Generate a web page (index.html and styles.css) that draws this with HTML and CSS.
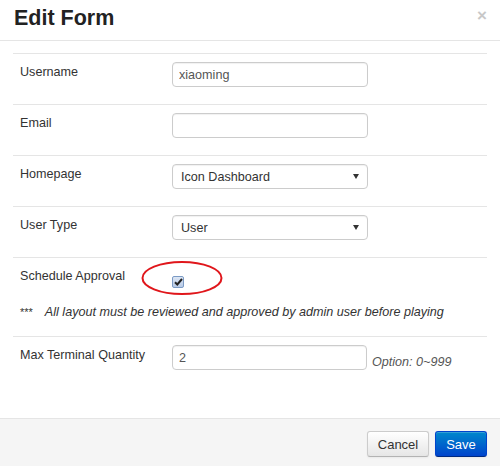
FILE: index.html
```html
<!DOCTYPE html>
<html>
<head>
<meta charset="utf-8">
<link rel="stylesheet" href="styles.css">
</head>
<body>
<div class="modal">
  <div class="modal-header">
    <h3 class="title">Edit Form</h3>
    <span class="close">&times;</span>
  </div>
  <div class="modal-body">
    <div class="row">
      <label class="lbl">Username</label>
      <div class="ctrl"><input class="field" type="text" value="xiaoming"></div>
    </div>
    <div class="row">
      <label class="lbl">Email</label>
      <div class="ctrl"><input class="field" type="text" value=""></div>
    </div>
    <div class="row">
      <label class="lbl">Homepage</label>
      <div class="ctrl">
        <div class="select-wrap">
          <select class="field select"><option>Icon Dashboard</option></select>
          <svg class="caret" width="6" height="5" viewBox="0 0 6 5"><path d="M0 0h6L3 5z" fill="#333"/></svg>
        </div>
      </div>
    </div>
    <div class="row">
      <label class="lbl">User Type</label>
      <div class="ctrl">
        <div class="select-wrap">
          <select class="field select"><option>User</option></select>
          <svg class="caret" width="6" height="5" viewBox="0 0 6 5"><path d="M0 0h6L3 5z" fill="#333"/></svg>
        </div>
      </div>
    </div>
    <div class="row row-check">
      <label class="lbl">Schedule Approval</label>
      <div class="ctrl check-ctrl">
        <span class="checkbox">
          <svg width="9" height="8" viewBox="0 0 9 8"><path d="M1 4.2l2.3 2.3L8 1" fill="none" stroke="#222" stroke-width="2"/></svg>
        </span>
        <svg class="ring" width="84" height="36" viewBox="0 0 84 36"><ellipse cx="42" cy="18" rx="39.5" ry="16" fill="none" stroke="#e0161b" stroke-width="2"/></svg>
      </div>
      <p class="note"><span class="stars">***</span><em>All layout must be reviewed and approved by admin user before playing</em></p>
    </div>
    <div class="row row-last">
      <label class="lbl">Max Terminal Quantity</label>
      <div class="ctrl qty">
        <input class="field" type="text" value="2">
        <em class="hint">Option: 0~999</em>
      </div>
    </div>
  </div>
  <div class="modal-footer">
    <button class="btn">Cancel</button>
    <button class="btn btn-primary">Save</button>
  </div>
</div>
</body>
</html>
```
FILE: styles.css
```css
* { box-sizing: border-box; }
html, body { margin: 0; padding: 0; background: #fff; }
body {
  font-family: "Liberation Sans", Arial, sans-serif;
  font-size: 12.6px;
  color: #333;
  width: 500px;
  height: 466px;
  overflow: hidden;
}
.modal {
  display: flex;
  flex-direction: column;
  height: 466px;
}
.modal-header {
  height: 41px;
  border-bottom: 1px solid #e5e5e5;
  display: flex;
  justify-content: space-between;
  align-items: flex-start;
  padding: 0 14px;
}
.title {
  margin: 5px 0 0 0;
  font-size: 21.5px;
  font-weight: bold;
  color: #222;
  line-height: 26px;
}
.close {
  font-size: 17px;
  font-weight: bold;
  color: #c8c8c8;
  line-height: 20px;
  margin-top: 6px;
  margin-right: -1px;
}
.modal-body {
  flex: 1;
  padding: 12px 13px 0 13px;
}
.row {
  border-top: 1px solid #e5e5e5;
  display: grid;
  grid-template-columns: 159px 1fr;
  padding: 8px 0 17px 0;
}
.lbl {
  padding-left: 7px;
  padding-top: 2px;
  line-height: 16px;
  color: #333;
}
.ctrl { display: flex; align-items: center; }
.field {
  width: 196px;
  height: 25px;
  border: 1px solid #ccc;
  border-radius: 4px;
  font-family: "Liberation Sans", Arial, sans-serif;
  font-size: 12.6px;
  color: #555;
  padding: 0 6px;
  background: #fff;
  box-shadow: inset 0 1px 1px rgba(0,0,0,0.06);
  margin: 0;
}
.select-wrap { position: relative; width: 196px; }
.select {
  appearance: none;
  -webkit-appearance: none;
  padding: 0 8px;
  color: #333;
}
.caret {
  position: absolute;
  right: 9px;
  top: 10px;
  pointer-events: none;
}
.row-check { padding-bottom: 16px; }
.check-ctrl {
  position: relative;
  height: 26px;
}
.checkbox {
  width: 12px;
  height: 12px;
  margin-top: 6px;
  border: 1px solid #7b9ac4;
  border-radius: 2px;
  background: linear-gradient(#dce6f4, #b8cae6);
  display: flex;
  align-items: center;
  justify-content: center;
}
.ring {
  position: absolute;
  left: -32px;
  top: -6px;
}
.note {
  grid-column: 1 / 3;
  margin: 12px 0 0 0;
  padding-left: 7px;
  line-height: 16px;
  color: #333;
}
.stars { font-size: 11px; margin-right: 12px; }
.note em { font-style: italic; }
.qty .field { width: 195px; }
.hint {
  font-style: italic;
  color: #555;
  margin-left: 5px;
  margin-top: 8px;
}
.modal-footer {
  height: 48px;
  border-top: 1px solid #e5e5e5;
  background: #f5f5f5;
  display: flex;
  justify-content: flex-end;
  align-items: flex-start;
  gap: 6px;
  padding: 12px 13px 0 0;
}
.btn {
  height: 26px;
  font-family: "Liberation Sans", Arial, sans-serif;
  font-size: 13px;
  color: #333;
  padding: 0 8px;
  border: 1px solid #ccc;
  border-bottom-color: #b3b3b3;
  border-radius: 3px;
  background: linear-gradient(#ffffff, #e6e6e6);
  box-shadow: inset 0 1px 0 rgba(255,255,255,0.2), 0 1px 2px rgba(0,0,0,0.05);
  width: 62px;
}
.btn-primary {
  width: 52px;
  color: #fff;
  border-color: #0044cc #0044cc #002a80;
  background: linear-gradient(#0088cc, #0044cc);
  font-weight: normal;
}
```
